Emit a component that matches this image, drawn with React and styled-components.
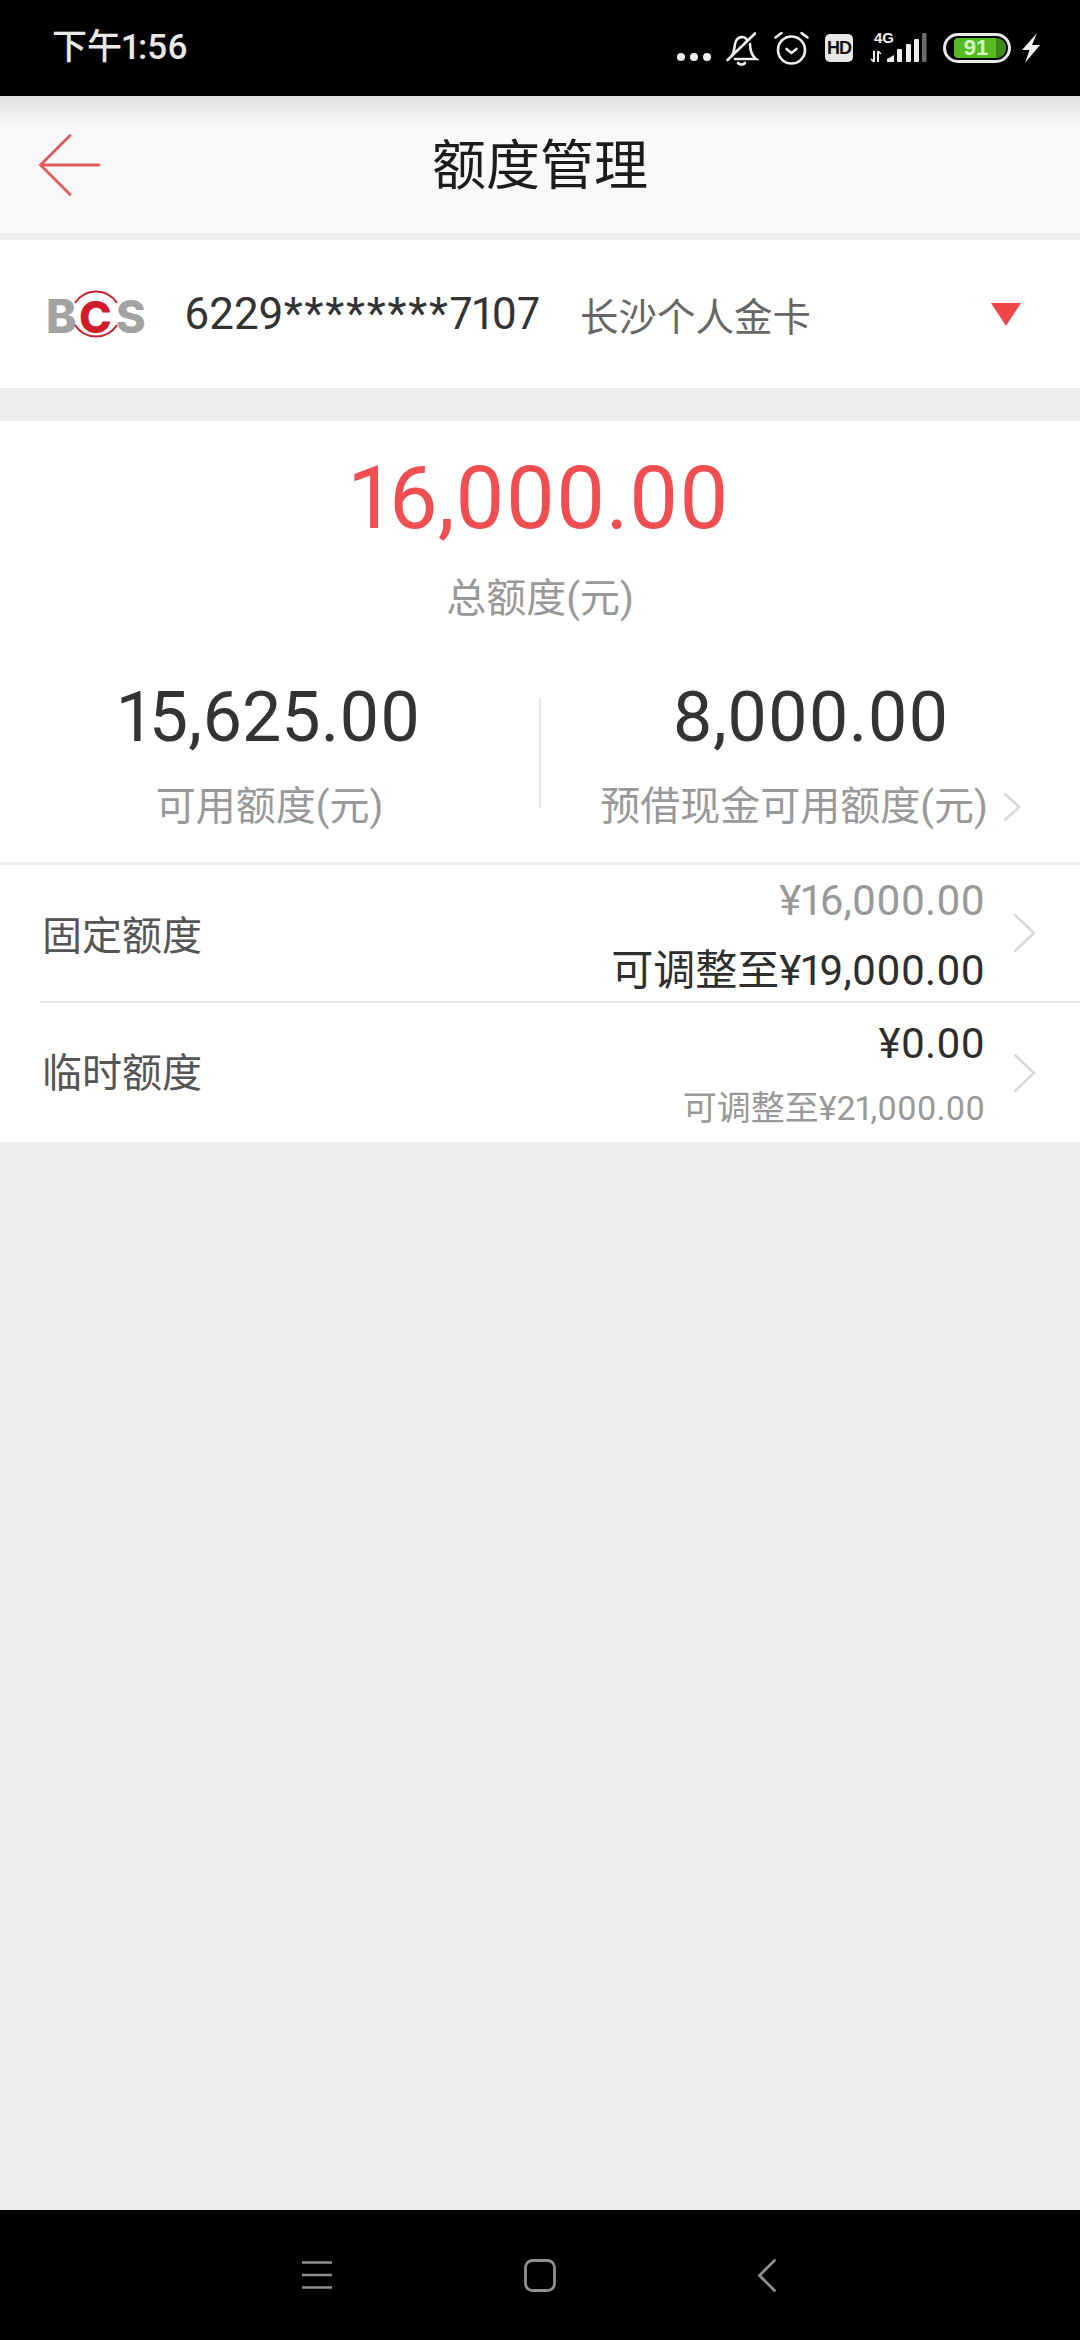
import React from "react";
import styled, { createGlobalStyle } from "styled-components";

const Global = createGlobalStyle`
  html, body { margin: 0; padding: 0; background: #eeeeee; }
  #root { width: 1080px; height: 2340px; }
  * { box-sizing: border-box; }
`;

const Page = styled.div`
  width: 1080px;
  height: 2340px;
  display: flex;
  flex-direction: column;
  background: #eeeeee;
  font-family: Roboto, "Noto Sans CJK SC", sans-serif;
  font-variant-numeric: proportional-nums;
  overflow: hidden;
`;

const StatusBar = styled.div`
  height: 96px;
  flex: none;
  background: #000;
  display: flex;
  align-items: center;
  justify-content: space-between;
  padding: 0 39px 0 52px;
`;

const Time = styled.div`
  color: #e8e8e8;
  font-size: 35px;
  font-weight: 500;
  line-height: 96px;
`;

const StatusIcons = styled.div`
  display: flex;
  align-items: center;
  height: 40px;
`;

const Dots = styled.div`
  display: flex;
  gap: 5px;
  margin: 18px 15px 0 0;
`;

const Dot = styled.span`
  width: 8px;
  height: 8px;
  border-radius: 50%;
  background: #eee;
`;

const IconSvg = styled.svg`
  display: block;
  flex: none;
  overflow: visible;
  margin-right: ${(p) => p.$mr || 0}px;
`;

const HdBadge = styled.div`
  width: 28px;
  height: 28px;
  border-radius: 5px;
  background: #e8e8e8;
  color: #111;
  font-family: "Liberation Sans", sans-serif;
  font-size: 18px;
  font-weight: 700;
  line-height: 28px;
  text-align: center;
  letter-spacing: -1px;
  margin: 0 17px 0 16px;
`;

const Battery = styled.div`
  width: 68px;
  height: 30px;
  border: 3px solid #e8e8e8;
  border-radius: 15px;
  padding: 2px 2px 2px 8px;
  margin: 0 10px 0 16px;
`;

const BatteryFill = styled.div`
  width: 100%;
  height: 100%;
  background: linear-gradient(90deg, #55bd22 0 80%, #3c8a18 80%);
  border-radius: 4px 9px 9px 4px;
  color: #d8f5c4;
  font-family: "Liberation Sans", sans-serif;
  font-size: 22px;
  font-weight: 700;
  line-height: 20px;
  text-align: center;
  padding-right: 8px;
`;

const Header = styled.header`
  height: 137px;
  flex: none;
  display: grid;
  grid-template-columns: 1fr auto 1fr;
  align-items: center;
  padding: 0 39px;
  background: linear-gradient(180deg, #dfe0e2 0, #f0f1f3 18px, #f8f9fb 34px);
`;

const Title = styled.h1`
  margin: 4px 0 0;
  color: #1c1c1c;
  font-size: 54px;
  font-weight: 400;
  line-height: 1;
`;

const HeaderGap = styled.div`
  height: 7px;
  flex: none;
  background: #eeeeee;
`;

const CardRow = styled.section`
  height: 148px;
  flex: none;
  background: #fff;
  display: flex;
  align-items: center;
  padding: 0 59px 0 46px;
`;

const CardNumber = styled.div`
  margin-left: 40px;
  color: #333;
  font-size: 44px;
`;

const Stars = styled.span`
  letter-spacing: 1.8px;
`;

const CardName = styled.div`
  margin-left: 40px;
  color: #666;
  font-size: 38.5px;
  flex: 1;
`;

const Triangle = styled.div`
  width: 0;
  height: 0;
  border-left: 15px solid transparent;
  border-right: 15px solid transparent;
  border-top: 23px solid #f04848;
`;

const Summary = styled.section`
  margin-top: 33px;
  height: 441px;
  flex: none;
  background: #fff;
  display: flex;
  flex-direction: column;
  align-items: center;
`;

const TotalAmount = styled.div`
  margin-top: 22px;
  color: #f04e50;
  font-size: 86.5px;
  line-height: 112px;
`;

const Label = styled.div`
  color: #999;
  font-size: 40px;
  line-height: 52px;
  white-space: nowrap;
`;

const TotalLabel = styled(Label)`
  margin-top: 18px;
`;

const Split = styled.div`
  margin-top: 48px;
  width: 100%;
  display: grid;
  grid-template-columns: 1fr 2px 1fr;
`;

const SplitDivider = styled.div`
  background: #e8e8e8;
  margin: 24px 0 25px;
`;

const SplitCol = styled.div`
  display: flex;
  flex-direction: column;
  align-items: center;
`;

const SplitAmount = styled.div`
  color: #333;
  font-size: 70px;
  line-height: 88px;
`;

const LabelLine = styled.div`
  display: flex;
  align-items: center;
  gap: 15px;
  margin-top: 20px;
`;

const RowList = styled.section`
  margin-top: 3px;
  flex: none;
  background: #fff;
`;

const Row = styled.div`
  height: ${(p) => p.$h}px;
  display: flex;
  align-items: center;
  padding: 0 44px 0 42px;
`;

const RowDivider = styled.div`
  height: 2px;
  margin-left: 40px;
  background: #e9e9e9;
`;

const RowTitle = styled.div`
  flex: 1;
  color: #555;
  font-size: 40px;
  margin-bottom: ${(p) => p.$lift || 0}px;
`;

const RowValues = styled.div`
  display: flex;
  flex-direction: column;
  align-items: flex-end;
  gap: 12px;
  margin-right: 28px;
  padding-top: ${(p) => p.$drop || 0}px;
`;

const RowValue = styled.div`
  color: ${(p) => (p.$muted ? "#999" : "#2e2e2e")};
  font-size: ${(p) => (p.$small ? 34 : 42)}px;
  line-height: ${(p) => (p.$small ? 46 : 58)}px;
  white-space: nowrap;
`;

const Spacer = styled.div`
  flex: 1;
`;

const NavBar = styled.nav`
  height: 130px;
  flex: none;
  background: #000;
  display: flex;
  align-items: center;
  padding-left: 302px;
`;

function Chevron({ w = 23, h = 40, color = "#d8d8d8", sw = 2.5 }) {
  return (
    <IconSvg width={w} height={h} viewBox={`0 0 ${w} ${h}`}>
      <path d={`M1.5 1.5 L${w - 2} ${h / 2} L1.5 ${h - 1.5}`} fill="none" stroke={color} strokeWidth={sw} />
    </IconSvg>
  );
}

function Logo() {
  return (
    <IconSvg width="98" height="52" viewBox="0 0 98 52">
      <text x="0" y="45" fontFamily="Inter" fontWeight="800" fontSize="46" fill="#a3a3a3">B</text>
      <text x="70" y="45" fontFamily="Inter" fontWeight="800" fontSize="45" fill="#a3a3a3">S</text>
      <path d="M29 15 A25 25 0 0 1 71 15" fill="none" stroke="#c8202c" strokeWidth="2" />
      <path d="M29 37 A25 25 0 0 0 71 37" fill="none" stroke="#c8202c" strokeWidth="2" />
      <text x="33" y="45" fontFamily="Inter" fontWeight="800" fontSize="44" fill="#d01c28">C</text>
    </IconSvg>
  );
}

export default function App() {
  return (
    <Page>
      <Global />
      <StatusBar>
        <Time>下午1:56</Time>
        <StatusIcons>
          <Dots><Dot /><Dot /><Dot /></Dots>
          <IconSvg width="31" height="33" viewBox="0 0 31 33" $mr={17} fill="none" stroke="#eee" strokeWidth="2.6" strokeLinecap="round">
            <path d="M1.5 28 L29 1.5" />
            <path d="M6 24 C9 19 8 13 10 9 C12 5 18 3 21 8" />
            <path d="M24 12 C24 18 25 23 30 27 L9 27" />
            <path d="M12 31 C14 33 17 33 19 31" />
          </IconSvg>
          <IconSvg width="35" height="34" viewBox="0 0 35 34" fill="none" stroke="#eee" strokeWidth="2.6" strokeLinecap="round" strokeLinejoin="round">
            <circle cx="17.5" cy="19" r="13.5" />
            <path d="M1.5 6.5 L7.5 2 M33.5 6.5 L27.5 2" />
            <path d="M12.5 18 L17.5 22 L22.5 18" />
          </IconSvg>
          <HdBadge>HD</HdBadge>
          <IconSvg width="57" height="30" viewBox="0 0 57 30" fill="#eee">
            <text x="4" y="10" fontFamily="Liberation Sans" fontWeight="700" fontSize="15">4G</text>
            <path d="M4 18 V29 M8 29 V18" stroke="#eee" strokeWidth="2" />
            <path d="M1 26 L4 29 M8 18 L11 21" stroke="#eee" strokeWidth="1.6" fill="none" />
            <path d="M17 29 V26 L24 22 V29 Z" />
            <rect x="27" y="16" width="5" height="13" rx="1" />
            <rect x="36" y="11" width="5" height="18" rx="1" />
            <rect x="44" y="6" width="5" height="23" rx="1" />
            <rect x="52" y="0" width="4.5" height="29" rx="1" fill="#6a6a6a" />
          </IconSvg>
          <Battery><BatteryFill>91</BatteryFill></Battery>
          <IconSvg width="20" height="30" viewBox="0 0 20 30" fill="#eee">
            <path d="M16 0 L1 17 L8.5 17 L4 30 L19 12 L11 12 Z" />
          </IconSvg>
        </StatusIcons>
      </StatusBar>

      <Header>
        <IconSvg width="62" height="62" viewBox="0 0 62 62" fill="none" stroke="#e25b5b" strokeWidth="2.8" strokeLinecap="round">
          <path d="M31 1.5 L1.5 31 L31 60.5 M1.5 31 L60 31" />
        </IconSvg>
        <Title>额度管理</Title>
      </Header>
      <HeaderGap />

      <CardRow>
        <Logo />
        <CardNumber>6229<Stars>********</Stars>7107</CardNumber>
        <CardName>长沙个人金卡</CardName>
        <Triangle />
      </CardRow>

      <Summary>
        <TotalAmount>16,000.00</TotalAmount>
        <TotalLabel>总额度(元)</TotalLabel>
        <Split>
          <SplitCol>
            <SplitAmount>15,625.00</SplitAmount>
            <LabelLine><Label>可用额度(元)</Label></LabelLine>
          </SplitCol>
          <SplitDivider />
          <SplitCol>
            <SplitAmount>8,000.00</SplitAmount>
            <LabelLine>
              <Label>预借现金可用额度(元)</Label>
              <Chevron w={18} h={30} />
            </LabelLine>
          </SplitCol>
        </Split>
      </Summary>

      <RowList>
        <Row $h={136}>
          <RowTitle>固定额度</RowTitle>
          <RowValues $drop={5}>
            <RowValue $muted>¥16,000.00</RowValue>
            <RowValue>可调整至¥19,000.00</RowValue>
          </RowValues>
          <Chevron />
        </Row>
        <RowDivider />
        <Row $h={139}>
          <RowTitle $lift={6}>临时额度</RowTitle>
          <RowValues>
            <RowValue>¥0.00</RowValue>
            <RowValue $muted $small>可调整至¥21,000.00</RowValue>
          </RowValues>
          <Chevron />
        </Row>
      </RowList>

      <Spacer />

      <NavBar>
        <IconSvg width="30" height="28" viewBox="0 0 30 28" $mr={192} stroke="#8f8f8f" strokeWidth="2.6">
          <path d="M0 1.5 H30 M0 14 H30 M0 26.5 H30" />
        </IconSvg>
        <IconSvg width="32" height="33" viewBox="0 0 32 33" $mr={202} fill="none" stroke="#8f8f8f" strokeWidth="2.8">
          <rect x="1.5" y="1.5" width="29" height="30" rx="7" />
        </IconSvg>
        <IconSvg width="18" height="33" viewBox="0 0 18 33" fill="none" stroke="#8f8f8f" strokeWidth="2.8" strokeLinecap="round">
          <path d="M16.5 1.5 L1.5 16.5 L16.5 31.5" />
        </IconSvg>
      </NavBar>
    </Page>
  );
}
